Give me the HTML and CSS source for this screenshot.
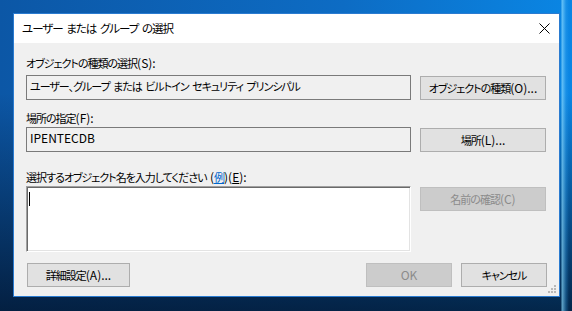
FILE: index.html
```html
<!DOCTYPE html>
<html lang="ja">
<head>
    <meta charset="UTF-8">
    <title>ユーザー または グループ の選択</title>
    <link rel="stylesheet" href="styles.css">
</head>
<body>
    <div class="dialog">
        <div class="titlebar">
            <span class="title">ユーザー または グループ の選択</span>
            <svg class="close" width="11" height="11" viewBox="0 0 11 11">
                <path d="M0.5 0.5 L10.5 10.5 M10.5 0.5 L0.5 10.5" stroke="#000" stroke-width="1" fill="none"/>
            </svg>
        </div>

        <div class="content">
            <div class="label">オブジェクトの種類の選択<span class="latin">(S):</span></div>
            <div class="row">
                <div class="field">ユーザー、グループ または ビルトイン セキュリティ プリンシパル</div>
                <button class="btn side">オブジェクトの種類<span class="latin">(O)...</span></button>
            </div>

            <div class="label second">場所の指定<span class="latin">(F):</span></div>
            <div class="row">
                <div class="field latin">IPENTECDB</div>
                <button class="btn side">場所<span class="latin">(L)...</span></button>
            </div>

            <div class="label third">選択するオブジェクト名を入力してください <span class="latin">(</span><a href="#">例</a><span class="latin">)(<u>E</u>):</span></div>
            <div class="row">
                <div class="textbox"><span class="caret"></span></div>
                <button class="btn side disabled">名前の確認<span class="latin">(C)</span></button>
            </div>

            <div class="footer">
                <button class="btn advanced">詳細設定<span class="latin">(A)...</span></button>
                <div class="spacer"></div>
                <button class="btn small disabled latin">OK</button>
                <button class="btn small">キャンセル</button>
            </div>
        </div>

        <svg class="grip" width="9" height="9" viewBox="0 0 9 9">
            <rect x="6" y="0" width="2" height="2" fill="#b8b8b8"/>
            <rect x="3" y="3" width="2" height="2" fill="#b8b8b8"/>
            <rect x="6" y="3" width="2" height="2" fill="#b8b8b8"/>
            <rect x="0" y="6" width="2" height="2" fill="#b8b8b8"/>
            <rect x="3" y="6" width="2" height="2" fill="#b8b8b8"/>
            <rect x="6" y="6" width="2" height="2" fill="#b8b8b8"/>
        </svg>
    </div>
</body>
</html>
```

FILE: styles.css
```css
html, body {
    margin: 0;
    width: 572px;
    height: 311px;
    overflow: hidden;
}
body {
    box-sizing: border-box;
    padding: 13px 0 0 13px;
    font-family: "Noto Sans CJK JP", "Noto Sans", sans-serif;
    font-size: 11px;
    font-feature-settings: "palt";
    letter-spacing: -1px;
    word-spacing: 2px;
    color: #000;
    background:
        linear-gradient(to right, rgba(0,0,0,0) 561px, rgba(140,220,255,0.7) 562px, rgba(60,170,240,0.3) 566px, rgba(0,0,0,0) 569px),
        linear-gradient(to bottom, rgba(0,0,0,0) 0%, rgba(0,0,0,0) 30%, rgba(2,22,48,0.85) 100%),
        linear-gradient(to right, #0c57a6 0%, #0d6cc4 60%, #0a86e4 100%);
}
.latin {
    font-size: 12px;
    letter-spacing: 0;
}
.dialog {
    position: relative;
    box-sizing: border-box;
    width: 547px;
    height: 284px;
    border: 1px solid #2a7bd0;
    background: #f0f0f0;
}
.titlebar {
    display: flex;
    align-items: center;
    height: 29px;
    padding: 0 9px 0 8px;
    background: #fff;
}
.title {
    flex: 1;
    margin-top: -1px;
    font-size: 11.5px;
    word-spacing: 2px;
}
.close {
    display: block;
    margin-top: -1px;
}
.content {
    padding: 12px 12px 0 12px;
}
.label {
    line-height: 16px;
    margin-bottom: 4px;
    white-space: nowrap;
}
.label.second {
    margin-top: 10px;
    margin-bottom: 1px;
}
.label.third {
    margin-top: 17px;
    margin-bottom: 1px;
}
.label a {
    color: #0066cc;
}
.row {
    display: flex;
    align-items: flex-start;
    gap: 9px;
}
.field {
    box-sizing: border-box;
    width: 385px;
    height: 25px;
    padding: 2px 3px;
    line-height: 16px;
    border: 1px solid #7a7a7a;
    white-space: nowrap;
    overflow: hidden;
}
.textbox {
    box-sizing: border-box;
    width: 385px;
    height: 66px;
    padding: 5px 2px;
    background: #fff;
    border-top: 1px solid #a0a0a0;
    border-left: 1px solid #a0a0a0;
    border-right: 1px solid #ffffff;
    border-bottom: 1px solid #ffffff;
    box-shadow: inset 1px 1px #696969, inset -1px -1px #e3e3e3;
}
.caret {
    display: block;
    width: 1px;
    height: 14px;
    background: #000;
}
.btn {
    box-sizing: border-box;
    height: 24px;
    padding: 0;
    font: inherit;
    letter-spacing: inherit;
    word-spacing: inherit;
    font-feature-settings: inherit;
    color: #000;
    background: #e1e1e1;
    border: 1px solid #adadad;
    line-height: 20px;
    white-space: nowrap;
}
.btn.latin {
    font-size: 12px;
    letter-spacing: 0;
}
.btn.side {
    width: 126px;
    margin-top: 1px;
}
.btn.disabled {
    color: #8b8b8b;
    background: #cccccc;
    border-color: #bfbfbf;
}
.footer {
    display: flex;
    gap: 9px;
    margin-top: 11px;
    padding-left: 1px;
}
.btn.advanced {
    width: 103px;
}
.btn.small {
    width: 86px;
}
.spacer {
    flex: 1;
}
.grip {
    position: absolute;
    right: 2px;
    bottom: 2px;
}
```
